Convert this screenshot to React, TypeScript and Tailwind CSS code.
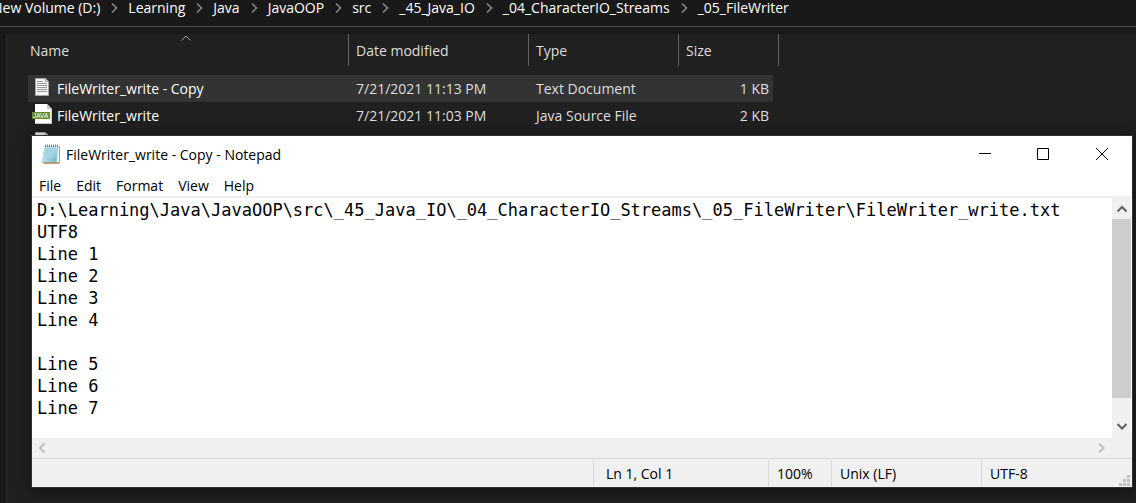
import { useState } from "react";

const crumbs = [
  "New Volume (D:)",
  "Learning",
  "Java",
  "JavaOOP",
  "src",
  "_45_Java_IO",
  "_04_CharacterIO_Streams",
  "_05_FileWriter",
];

const content = `D:\\Learning\\Java\\JavaOOP\\src\\_45_Java_IO\\_04_CharacterIO_Streams\\_05_FileWriter\\FileWriter_write.txt
UTF8
Line 1
Line 2
Line 3
Line 4

Line 5
Line 6
Line 7`;

type Direction = "up" | "down" | "left" | "right";

const arrowPaths: Record<Direction, string> = {
  up: "M.5 7.500 5 3 9.500 7.500",
  down: "M.5 3 5 7.500 9.500 3",
  left: "M7.500.500 3 5 7.500 9.500",
  right: "M3 .5 7.500 5 3 9.500",
};

function Arrow({ direction, className }: { direction: Direction; className: string }) {
  return (
    <svg width="10" height="10" viewBox="0 0 10 10" fill="none" stroke="currentColor" className={className} aria-hidden="true">
      <path d={arrowPaths[direction]} />
    </svg>
  );
}

function TextIcon() {
  return (
    <svg width="20" height="21" viewBox="0 0 20 21" aria-hidden="true">
      <path d="M3.500 0.500H13.500L16.500 3.500V17.500H3.500Z" fill="#f4f4f4" stroke="#a5a5a5" />
      <path d="M13.500 0.500V3.500H16.500" fill="#d0d0d0" stroke="#a5a5a5" />
      <path d="M5 3.500H11M5 5.500H15M5 7.500H15M5 9.500H15M5 11.500H15M5 13.500H15" stroke="#999" />
    </svg>
  );
}

function JavaIcon() {
  return (
    <svg width="20" height="23" viewBox="0 0 20 23" aria-hidden="true">
      <path d="M3 0H15L20 5V20H3Z" fill="#fff" />
      <path d="M15 0V5H20Z" fill="#c4c4c4" />
      <path d="M3 19.500H19.500V5" fill="none" stroke="#c8c8c8" />
      <rect y="8" width="18" height="7" fill="#648a2c" />
      <text x="1" y="14" fill="#fff" fontFamily="Liberation Sans, sans-serif" fontSize="6.500">JAVA</text>
    </svg>
  );
}

function NotepadIcon() {
  return (
    <svg width="20" height="20" viewBox="0 0 20 20" aria-hidden="true">
      <defs>
        <linearGradient id="page" x1="0" y1="0" x2="1" y2="1">
          <stop offset="0" stopColor="#a5d3e2" />
          <stop offset="0.500" stopColor="#b9e4ef" />
          <stop offset="1" stopColor="#62adc6" />
        </linearGradient>
      </defs>
      <path d="M4 2H19V19L17 20H3L1 18Z" fill="#b9a074" />
      <path d="M4 2H18V18H2Z" fill="#f4f1e4" />
      <path d="M4 2H17.500L15.500 18H0.500Z" fill="url(#page)" />
      <path d="M4.500 5H16M4 7H15.500M3.700 9H15.300M3.300 11H15M3 13H14.700M2.700 15H14.500" stroke="#82bdce" strokeWidth="0.600" />
      <path d="M4.500 0.500V3M6.500 0.500V3M8.500 0.500V3M10.500 0.500V3M12.500 0.500V3M14.500 0.500V3M16.500 0.500V3" stroke="#66777b" strokeWidth="0.900" />
    </svg>
  );
}

const files = [
  { name: "FileWriter_write - Copy", date: "7/21/2021 11:13 PM", type: "Text Document", size: "1 KB", Icon: TextIcon, selected: true },
  { name: "FileWriter_write", date: "7/21/2021 11:03 PM", type: "Java Source File", size: "2 KB", Icon: JavaIcon, selected: false },
];

function Explorer() {
  return (
    <div className="flex min-h-screen flex-col overflow-hidden bg-[#191919] text-white">
      <nav aria-label="Path" className="flex h-[27px] shrink-0 items-start border-b border-[#505050] whitespace-nowrap">
        <ol className="-ml-2 flex leading-4">
          {crumbs.map((crumb, i) => (
            <li key={crumb} className="flex items-center">
              {i > 0 && <Arrow direction="right" className="mx-[9px] stroke-[1.500] text-[#8b8b8b]" />}
              <a href="#">{crumb}</a>
            </li>
          ))}
        </ol>
      </nav>
      <div className="mt-[7px] ml-1.5 flex-1 border-l border-[#2b2b2b] bg-[#202020] pl-[21px]">
        <table className="w-[751px] table-fixed border-separate border-spacing-0 text-left">
          <colgroup>
            <col className="w-[321px]" />
            <col className="w-[180px]" />
            <col className="w-[150px]" />
            <col className="w-[100px]" />
          </colgroup>
          <thead className="text-[#dedede]">
            <tr className="h-8 *:border-r *:border-[#636363] *:pt-1 *:pb-0.5 *:font-normal">
              <th className="relative pl-0.5">
                Name
                <Arrow direction="up" className="absolute -top-px left-[153px] text-[#a0a0a0]" />
              </th>
              <th className="pl-[7px]">Date modified</th>
              <th className="pl-[7px]">Type</th>
              <th className="pl-[7px]">Size</th>
            </tr>
          </thead>
          <tbody className="text-[#dedede] before:block before:h-[9px]">
            {files.map(({ name, date, type, size, Icon, selected }) => (
              <tr key={name} className={selected ? "h-[27px] *:bg-[#333333]" : "h-[27px]"}>
                <td className="p-0 text-white">
                  <div className="flex items-center gap-[5px] pl-1">
                    <Icon />
                    {name}
                  </div>
                </td>
                <td className="p-0 pl-[7px]">{date}</td>
                <td className="p-0 pl-[7px]">{type}</td>
                <td className="border-r-[6px] border-transparent bg-clip-padding p-0 pr-1 text-right">{size}</td>
              </tr>
            ))}
            <tr className="h-[27px]">
              <td className="p-0 pl-1">
                <div className="flex">
                  <TextIcon />
                </div>
              </td>
            </tr>
          </tbody>
        </table>
      </div>
    </div>
  );
}

function Notepad() {
  const [text, setText] = useState(content);
  return (
    <section
      aria-label="Notepad"
      className="absolute top-[136px] right-1 bottom-4 left-8 flex flex-col bg-white text-black shadow-[0_0_0_1px_#303030,0_2px_14px_2px_rgba(0,0,0,0.450)]"
    >
      <header className="flex h-9 shrink-0 items-center pl-[9px]">
        <NotepadIcon />
        <h1 className="ml-[5px] flex-1 pt-0.5">FileWriter_write - Copy - Notepad</h1>
        <div className="flex h-full">
          <button aria-label="Minimize" className="grid w-[58px] place-items-center">
            <svg width="12" height="12" viewBox="0 0 12 12" stroke="#000"><path d="M0 5.500H12" /></svg>
          </button>
          <button aria-label="Maximize" className="grid w-[58px] place-items-center">
            <svg width="12" height="12" viewBox="0 0 12 12" stroke="#000" fill="none"><path d="M.5.500H11.500V11.500H.5Z" /></svg>
          </button>
          <button aria-label="Close" className="grid w-[60px] place-items-center">
            <svg width="12" height="12" viewBox="0 0 12 12" stroke="#000"><path d="M0 0 12 12M12 0 0 12" /></svg>
          </button>
        </div>
      </header>
      <div role="menubar" className="flex h-[26px] shrink-0 items-center gap-[15px] border-b-2 border-[#f0f0f0] pt-1 pl-[7px]">
        {["File", "Edit", "Format", "View", "Help"].map((item) => (
          <button key={item} role="menuitem">{item}</button>
        ))}
      </div>
      <div className="flex min-h-0 flex-1 pr-px">
        <textarea
          aria-label="Document text"
          value={text}
          onChange={(e) => setText(e.target.value)}
          wrap="off"
          spellCheck={false}
          className="block min-w-0 flex-1 resize-none overflow-hidden pt-px pl-[5px] font-['DejaVu_Sans_Mono',monospace] text-[17px] leading-[22px] outline-none"
        />
        <div className="flex w-[19px] flex-col bg-[#f0f0f0]">
          <button aria-label="Scroll up" className="grid h-[21px] place-items-center">
            <Arrow direction="up" className="stroke-2 text-[#606060]" />
          </button>
          <div className="h-[179px] bg-[#cdcdcd]" />
          <button aria-label="Scroll down" className="mt-auto grid h-6 place-items-center">
            <Arrow direction="down" className="stroke-2 text-[#606060]" />
          </button>
        </div>
      </div>
      <div className="flex h-5 shrink-0 items-center justify-between bg-[#f0f0f0] pr-[26px] pl-[5px]">
        <button aria-label="Scroll left"><Arrow direction="left" className="stroke-2 text-[#bfbfbf]" /></button>
        <button aria-label="Scroll right"><Arrow direction="right" className="stroke-2 text-[#bfbfbf]" /></button>
      </div>
      <footer className="flex h-[29px] shrink-0 justify-end border-t border-[#d7d7d7] bg-[#f0f0f0] pt-px pb-px leading-[27px]">
        <div className="w-[175px] border-l border-[#d7d7d7] pl-3">Ln 1, Col 1</div>
        <div className="w-[63px] border-l border-[#d7d7d7] pl-2">100%</div>
        <div className="w-[150px] border-l border-[#d7d7d7] pl-2">Unix (LF)</div>
        <div className="flex w-[151px] justify-between border-l border-[#d7d7d7] pr-0.5 pl-2">
          UTF-8
          <svg width="11" height="11" viewBox="0 0 11 11" fill="#bfbfbf" className="self-end" aria-hidden="true">
            <path d="M8 0h3v3H8zM4 4h3v3H4zM8 4h3v3H8zM0 8h3v3H0zM4 8h3v3H4zM8 8h3v3H8z" />
          </svg>
        </div>
      </footer>
    </section>
  );
}

export default function App() {
  return (
    <main className="relative min-h-screen overflow-hidden font-['Open_Sans','Noto_Sans',sans-serif] text-[14px] leading-5">
      <Explorer />
      <Notepad />
    </main>
  );
}
